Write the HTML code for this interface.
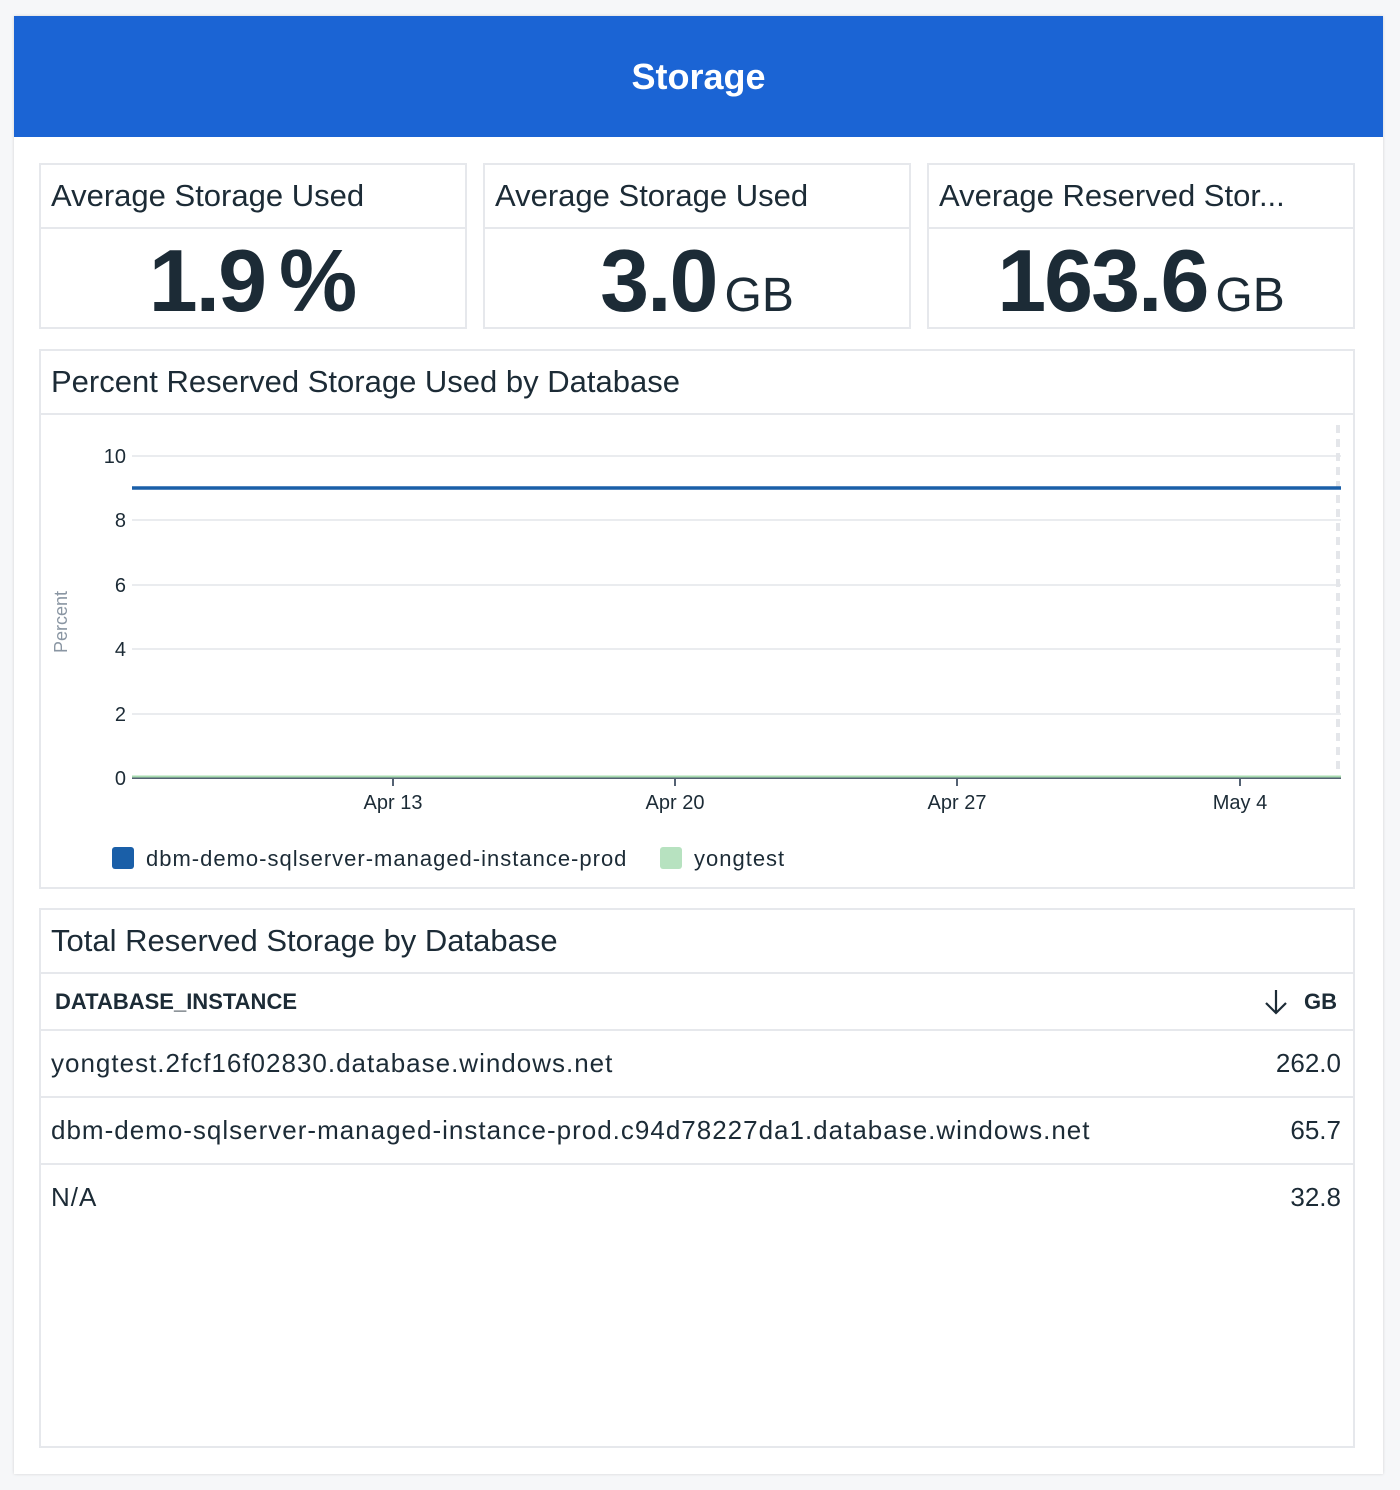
<!DOCTYPE html><html><head><meta charset="utf-8"><style>
body{margin:0;width:1400px;height:1490px;background:#f6f7f9;font-family:"Liberation Sans","DejaVu Sans",sans-serif;color:#1c2b36;position:relative;overflow:hidden}
.card{position:absolute;left:14px;top:16px;width:1369px;height:1458px;background:#fff;box-shadow:0 0 3px rgba(0,0,0,.15)}
.hdr{position:absolute;left:14px;top:16px;width:1369px;height:121px;background:#1b64d4;color:#fff;font-weight:bold;font-size:36px;text-align:center;line-height:122px}
.box{position:absolute;border:2px solid #e6e8ec;background:#fff;box-sizing:border-box}
.t{position:absolute;left:11px;top:0;height:62px;line-height:62px;font-size:31px;right:0;border-bottom:2px solid #e6e8ec;margin-left:-11px;padding-left:10px}
.val{position:absolute;left:0;right:0;top:64px;height:100px;text-align:center;font-weight:bold;font-size:88px;line-height:104px;letter-spacing:-2px}
.val span{font-weight:normal;font-size:48px;letter-spacing:0;margin-left:8px}
.row{position:absolute;left:0;right:0;height:65px;border-bottom:2px solid #e6e8ec;font-size:26px;line-height:65px}
.row .a{position:absolute;left:10px;letter-spacing:1px}.row .b{position:absolute;right:12px}
</style></head><body>
<div class="card"></div>
<div class="hdr">Storage</div>
<div class="box" style="left:39px;top:163px;width:428px;height:166px"><div class="t">Average Storage Used</div><div class="val">1.9<span style="font-weight:bold;font-size:88px;margin-left:14px">%</span></div></div>
<div class="box" style="left:483px;top:163px;width:428px;height:166px"><div class="t">Average Storage Used</div><div class="val">3.0<span>GB</span></div></div>
<div class="box" style="left:927px;top:163px;width:428px;height:166px"><div class="t">Average Reserved Stor...</div><div class="val">163.6<span>GB</span></div></div>
<div class="box" style="left:39px;top:349px;width:1316px;height:540px"><div class="t">Percent Reserved Storage Used by Database</div></div>
<svg style="position:absolute;left:0;top:0" width="1400" height="900">
<g stroke="#e4e6ea" stroke-width="1.5">
<line x1="132" x2="1341" y1="456" y2="456"/><line x1="132" x2="1341" y1="520" y2="520"/><line x1="132" x2="1341" y1="585" y2="585"/><line x1="132" x2="1341" y1="649" y2="649"/><line x1="132" x2="1341" y1="714" y2="714"/></g>
<line x1="1338" x2="1338" y1="425" y2="775" stroke="#e4e6ea" stroke-width="4" stroke-dasharray="8 6"/>
<line x1="132" x2="1341" y1="488" y2="488" stroke="#1a5fa8" stroke-width="3.5"/>
<line x1="132" x2="1341" y1="778" y2="778" stroke="#546273" stroke-width="2"/>
<line x1="132" x2="1341" y1="776.5" y2="776.5" stroke="#a8dcb0" stroke-width="2"/>
<g stroke="#546273" stroke-width="2"><line x1="393" x2="393" y1="778" y2="786"/><line x1="675" x2="675" y1="778" y2="786"/><line x1="957" x2="957" y1="778" y2="786"/><line x1="1240" x2="1240" y1="778" y2="786"/></g>
<g font-size="20" fill="#1c2b36" text-anchor="end" font-family="Liberation Sans,sans-serif"><text x="126" y="463">10</text><text x="126" y="527">8</text><text x="126" y="592">6</text><text x="126" y="656">4</text><text x="126" y="721">2</text><text x="126" y="785">0</text></g>
<g font-size="20" fill="#1c2b36" text-anchor="middle" font-family="Liberation Sans,sans-serif"><text x="393" y="809">Apr 13</text><text x="675" y="809">Apr 20</text><text x="957" y="809">Apr 27</text><text x="1240" y="809">May 4</text></g>
<text x="67" y="622" font-size="18" fill="#8a96a3" text-anchor="middle" transform="rotate(-90 67 622)" font-family="Liberation Sans,sans-serif">Percent</text>
<rect x="112" y="847" width="22" height="22" rx="3" fill="#1a5fa8"/><text x="146" y="866" font-size="22" letter-spacing="1" fill="#1c2b36" font-family="Liberation Sans,sans-serif">dbm-demo-sqlserver-managed-instance-prod</text>
<rect x="660" y="847" width="22" height="22" rx="3" fill="#b7e2c0"/><text x="694" y="866" font-size="22" letter-spacing="1" fill="#1c2b36" font-family="Liberation Sans,sans-serif">yongtest</text>
</svg>
<div class="box" style="left:39px;top:908px;width:1316px;height:540px"><div class="t">Total Reserved Storage by Database</div>
<div class="row" style="top:64px;height:55px;line-height:55px;font-size:22px;font-weight:bold"><span class="a" style="left:14px;letter-spacing:0">DATABASE_INSTANCE</span><svg style="position:absolute;right:64px;top:14px" width="26" height="28" viewBox="0 0 26 28"><path d="M13 2V25M3 15L13 25L23 15" fill="none" stroke="#1c2b36" stroke-width="2.2"/></svg><span class="b" style="right:16px">GB</span></div>
<div class="row" style="top:121px"><span class="a">yongtest.2fcf16f02830.database.windows.net</span><span class="b">262.0</span></div>
<div class="row" style="top:188px"><span class="a">dbm-demo-sqlserver-managed-instance-prod.c94d78227da1.database.windows.net</span><span class="b">65.7</span></div>
<div class="row" style="top:255px;border:none"><span class="a">N/A</span><span class="b">32.8</span></div>
</div>
</body></html>
